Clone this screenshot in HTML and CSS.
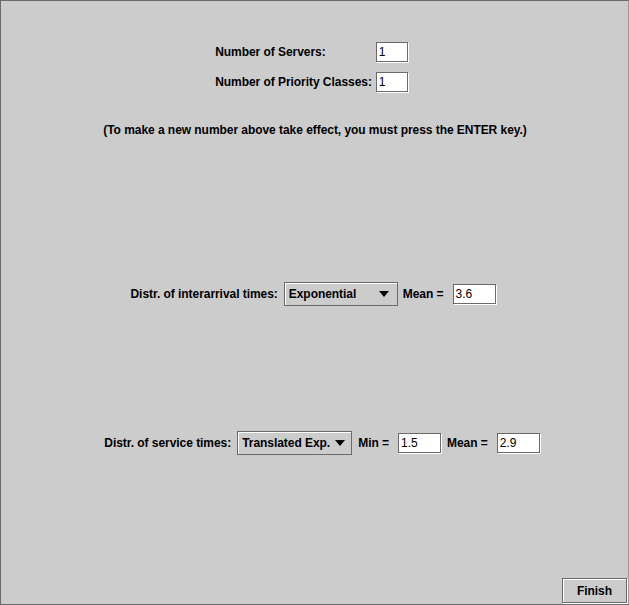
FILE: index.html
```html
<!DOCTYPE html>
<html>
<head>
<meta charset="utf-8">
<link rel="stylesheet" href="styles.css">
</head>
<body>
<div class="window">
  <div class="grid">
    <span class="lbl">Number of Servers:</span>
    <span class="field narrow">1</span>
    <span class="lbl">Number of Priority Classes:</span>
    <span class="field narrow">1</span>
  </div>
  <div class="note">(To make a new number above take effect, you must press the ENTER key.)</div>
  <div class="row row3">
    <span class="lbl">Distr. of interarrival times:</span>
    <span class="combo"><span class="ctext">Exponential</span><span class="arrow"></span></span>
    <span class="lbl eq">Mean =</span>
    <span class="field wide">3.6</span>
  </div>
  <div class="row row4">
    <span class="lbl">Distr. of service times:</span>
    <span class="combo"><span class="ctext">Translated Exp.</span><span class="arrow"></span></span>
    <span class="lbl eq">Min =</span>
    <span class="field wide">1.5</span>
    <span class="lbl eq">Mean =</span>
    <span class="field wide">2.9</span>
  </div>
  <div class="footer">
    <span class="button">Finish</span>
  </div>
</div>
</body>
</html>
```
FILE: styles.css
```css
html, body {
  margin: 0;
  padding: 0;
  background: #cccccc;
}
.window {
  box-sizing: border-box;
  width: 629px;
  height: 605px;
  background: #cccccc;
  border-left: 1px solid #6a6a6a;
  border-top: 1px solid #6a6a6a;
  border-bottom: 1px solid #6a6a6a;
  border-right: 1px solid #9a9a9a;
  font-family: "Liberation Sans", Arial, sans-serif;
  font-size: 12px;
  font-weight: bold;
  letter-spacing: -0.05px;
  color: #000;
  display: flex;
  flex-direction: column;
  padding-top: 41px;
}
.grid {
  display: grid;
  grid-template-columns: auto auto;
  column-gap: 4px;
  row-gap: 10px;
  justify-content: center;
  align-items: center;
  padding-right: 6px;
}
.lbl {
  white-space: nowrap;
  line-height: 20px;
}
.field {
  box-sizing: border-box;
  height: 20px;
  background: #fff;
  border: 1px solid #6a6a6a;
  box-shadow: 1px 1px 0 #fff;
  font-weight: normal;
  font-size: 12px;
  letter-spacing: 0;
  line-height: 18px;
  padding-left: 2px;
  color: #000;
}
.narrow { width: 32px; }
.wide { width: 43px; }
.note {
  margin-top: 30px;
  text-align: center;
  line-height: 16px;
  padding-left: 1px;
}
.row {
  display: flex;
  justify-content: center;
  align-items: center;
  gap: 6px;
}
.row3 { margin-top: 144px; padding-right: 3px; }
.row4 { margin-top: 125px; padding-left: 15px; }
.row3 .combo { margin-right: -1px; }
.eq { margin-right: 3px; }
.combo {
  box-sizing: border-box;
  width: 114px;
  height: 24px;
  border: 1px solid #6a6a6a;
  box-shadow: inset 1px 1px 0 #fff;
  display: flex;
  align-items: center;
  justify-content: space-between;
  padding: 0 8px 0 4px;
}
.row4 .combo { width: 115px; padding-right: 6px; }
.ctext { white-space: nowrap; }
.arrow {
  flex: none;
  width: 0;
  height: 0;
  border-left: 5px solid transparent;
  border-right: 5px solid transparent;
  border-top: 6px solid #000;
}
.footer {
  margin-top: auto;
  display: flex;
  justify-content: flex-end;
  padding: 0 1px 0 0;
}
.button {
  box-sizing: border-box;
  width: 65px;
  height: 25px;
  border: 1px solid #6a6a6a;
  box-shadow: inset 1px 1px 0 #fff, 1px 1px 0 #fff;
  display: flex;
  align-items: center;
  justify-content: center;
  margin-bottom: 1px;
}
```
